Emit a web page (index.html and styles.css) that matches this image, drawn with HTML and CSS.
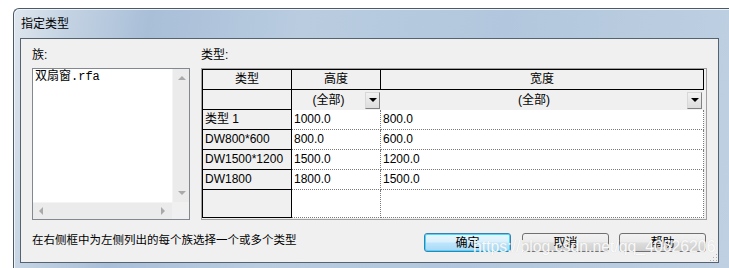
FILE: index.html
```html
<!DOCTYPE html>
<html>
    <head>
        <title>指定类型</title>
        <link rel="stylesheet" href="styles.css">
    </head>
    <body>
        <div class="window">
            <div class="title-bar">指定类型</div>
            <div class="client">
                <div class="top-row">
                    <div class="left-col">
                        <div class="label">族:</div>
                        <div class="listbox">
                            <div class="list-items">
                                <div class="list-item">双扇窗<span class="mono">.rfa</span></div>
                            </div>
                            <div class="vscroll">
                                <span class="arr arr-up"></span>
                                <span class="arr arr-down"></span>
                            </div>
                            <div class="hscroll">
                                <span class="arr arr-left"></span>
                                <span class="arr arr-right"></span>
                            </div>
                            <div class="corner"></div>
                        </div>
                    </div>
                    <div class="right-col">
                        <div class="label">类型:</div>
                        <div class="grid-wrap">
                            <div class="grid">
                                <div class="cell head">类型</div>
                                <div class="cell head">高度</div>
                                <div class="cell head">宽度</div>

                                <div class="cell rowhead"></div>
                                <div class="cell filter">
                                    <span class="filter-text">(全部)</span>
                                    <span class="drop"><span class="tri"></span></span>
                                </div>
                                <div class="cell filter">
                                    <span class="filter-text">(全部)</span>
                                    <span class="drop"><span class="tri"></span></span>
                                </div>

                                <div class="cell rowhead">类型 1</div>
                                <div class="cell data">1000.0</div>
                                <div class="cell data">800.0</div>

                                <div class="cell rowhead">DW800*600</div>
                                <div class="cell data">800.0</div>
                                <div class="cell data">600.0</div>

                                <div class="cell rowhead">DW1500*1200</div>
                                <div class="cell data">1500.0</div>
                                <div class="cell data">1200.0</div>

                                <div class="cell rowhead">DW1800</div>
                                <div class="cell data">1800.0</div>
                                <div class="cell data">1500.0</div>

                                <div class="cell rowhead last"></div>
                                <div class="cell data last"></div>
                                <div class="cell data last"></div>
                            </div>
                        </div>
                    </div>
                </div>
                <div class="bottom-row">
                    <div class="hint">在右侧框中为左侧列出的每个族选择一个或多个类型</div>
                    <div class="buttons">
                        <button class="btn btn-default">确定</button>
                        <button class="btn">取消</button>
                        <button class="btn">帮助</button>
                    </div>
                </div>
                <div class="grip"></div>
            </div>
        </div>
        <div class="watermark">https://blog.csdn.net/qq_40626206</div>
    </body>
</html>
```
FILE: styles.css
```css
body {
    margin: 0;
    background: #fff;
    font-family: "Liberation Sans", "Noto Sans CJK SC", sans-serif;
    font-size: 12px;
    color: #000;
    overflow: hidden;
}

.window {
    margin: 8px 0 0 13px;
    width: 716px;
    height: 262px;
    box-sizing: border-box;
    border: 1px solid #4c5a68;
    border-right: none;
    border-radius: 6px 0 0 0;
    padding: 0 9px 0 6px;
    background: linear-gradient(100deg, #dfe6ee 0%, #c4d3e3 7%, #a9bfd8 18%, #b9cce0 38%, #b2c7dd 65%, #bfd0e2 100%);
    box-shadow: inset 1px 1px 0 #eef3f8;
}

.title-bar {
    height: 29px;
    box-sizing: border-box;
    padding: 8px 0 0 1px;
    line-height: 14px;
    font-size: 12px;
    color: #000;
}

.client {
    position: relative;
    width: 699px;
    height: 225px;
    box-sizing: border-box;
    border: 1px solid #55626f;
    background: #f0f0f0;
    padding: 6px 11px 0 11px;
}

.top-row {
    display: flex;
    gap: 11px;
}

.left-col {
    width: 158px;
}

.right-col {
    flex: 1;
}

.label {
    height: 23px;
    line-height: 20px;
    font-size: 12px;
}

/* list box with scrollbars */
.listbox {
    height: 152px;
    box-sizing: border-box;
    border: 1px solid #828790;
    background: #fff;
    display: grid;
    grid-template-columns: 1fr 17px;
    grid-template-rows: 1fr 17px;
}

.list-items {
    padding: 0 0 0 2px;
}

.list-item {
    line-height: 14px;
    font-size: 12px;
    padding-top: 1px;
    font-family: "Liberation Mono", "Noto Sans CJK SC", monospace;
}

.mono {
    font-family: "Liberation Mono", monospace;
    font-size: 12px;
}

.vscroll {
    position: relative;
    background: #ebebeb;
    border-left: 1px solid #f4f4f4;
}

.hscroll {
    position: relative;
    background: #ebebeb;
    border-top: 1px solid #f4f4f4;
}

.corner {
    background: #f0f0f0;
}

.arr {
    position: absolute;
    width: 0;
    height: 0;
}

.arr-up {
    left: 5px;
    top: 7px;
    border-left: 4px solid transparent;
    border-right: 4px solid transparent;
    border-bottom: 4px solid #a9a9a9;
}

.arr-down {
    left: 5px;
    bottom: 7px;
    border-left: 4px solid transparent;
    border-right: 4px solid transparent;
    border-top: 4px solid #a9a9a9;
}

.arr-left {
    left: 6px;
    top: 4px;
    border-top: 4px solid transparent;
    border-bottom: 4px solid transparent;
    border-right: 4px solid #a9a9a9;
}

.arr-right {
    right: 7px;
    top: 4px;
    border-top: 4px solid transparent;
    border-bottom: 4px solid transparent;
    border-left: 4px solid #a9a9a9;
}

/* type grid */
.grid-wrap {
    height: 152px;
    box-sizing: border-box;
    border: 1px solid #a0a0a0;
    padding: 0 2px 1px 0;
    background: #f0f0f0;
}

.grid {
    display: grid;
    grid-template-columns: 89px 89px 1fr;
    grid-template-rows: 20px 20px 20px 20px 20px 20px 28px;
    border-left: 1px solid #000;
    border-top: 1px solid #000;
}

.cell {
    box-sizing: border-box;
    border-right: 1px solid #000;
    border-bottom: 1px solid #000;
    line-height: 19px;
    font-size: 12px;
    white-space: nowrap;
    overflow: hidden;
}

.head {
    background: #f0f0f0;
    text-align: center;
}

.rowhead {
    background: #f0f0f0;
    padding-left: 2px;
}

.filter {
    display: flex;
    align-items: center;
    background: #f0f0f0;
    border-right: none;
    border-bottom: none;
}

.filter + .filter {
    border-right: 1px solid transparent;
}

.filter-text {
    flex: 1;
    text-align: center;
}

.drop {
    width: 15px;
    height: 17px;
    box-sizing: border-box;
    margin-right: 1px;
    border: 1px solid;
    border-color: #d8d8d8 #808080 #808080 #d8d8d8;
    background: linear-gradient(#f2f2f2, #dcdcdc);
    display: flex;
    align-items: center;
    justify-content: center;
}

.tri {
    width: 0;
    height: 0;
    border-left: 4px solid transparent;
    border-right: 4px solid transparent;
    border-top: 4px solid #000;
}

.data {
    background: #fff;
    border-right: 1px dotted #7a7a7a;
    border-bottom: 1px dotted #7a7a7a;
    padding-left: 2px;
}

/* bottom */
.bottom-row {
    display: flex;
    justify-content: space-between;
    align-items: flex-start;
    margin-top: 13px;
}

.hint {
    font-size: 11.5px;
    line-height: 14px;
}

.buttons {
    display: flex;
    gap: 10px;
    margin-right: 1px;
}

.btn {
    width: 87px;
    height: 19px;
    box-sizing: border-box;
    padding: 0;
    border: 1px solid #707070;
    border-radius: 3px;
    background: linear-gradient(#f2f2f2 0%, #ebebeb 48%, #dddddd 52%, #cfcfcf 100%);
    font-family: "Liberation Sans", "Noto Sans CJK SC", sans-serif;
    font-size: 12px;
    line-height: 16px;
    color: #000;
}

.btn-default {
    margin-right: 1px;
    border-color: #3c7fb1;
    background: linear-gradient(#eaf6fd 0%, #d9f0fc 48%, #bee6fd 52%, #a7d9f5 100%);
    box-shadow: inset 0 0 0 1px #48d8fb;
}

.grip {
    position: absolute;
    right: 1px;
    bottom: 1px;
    width: 8px;
    height: 8px;
    background: radial-gradient(circle, #b0b0b0 0.8px, transparent 1px) 0 0 / 3px 3px;
    clip-path: polygon(100% 0, 100% 100%, 0 100%);
}

.watermark {
    position: absolute;
    left: 473px;
    top: 238px;
    font-family: "Liberation Sans", sans-serif;
    font-size: 15.8px;
    color: rgba(255, 255, 255, 0.9);
    text-shadow: 0 0 1px rgba(190, 190, 190, 0.6);
    white-space: nowrap;
}
```
